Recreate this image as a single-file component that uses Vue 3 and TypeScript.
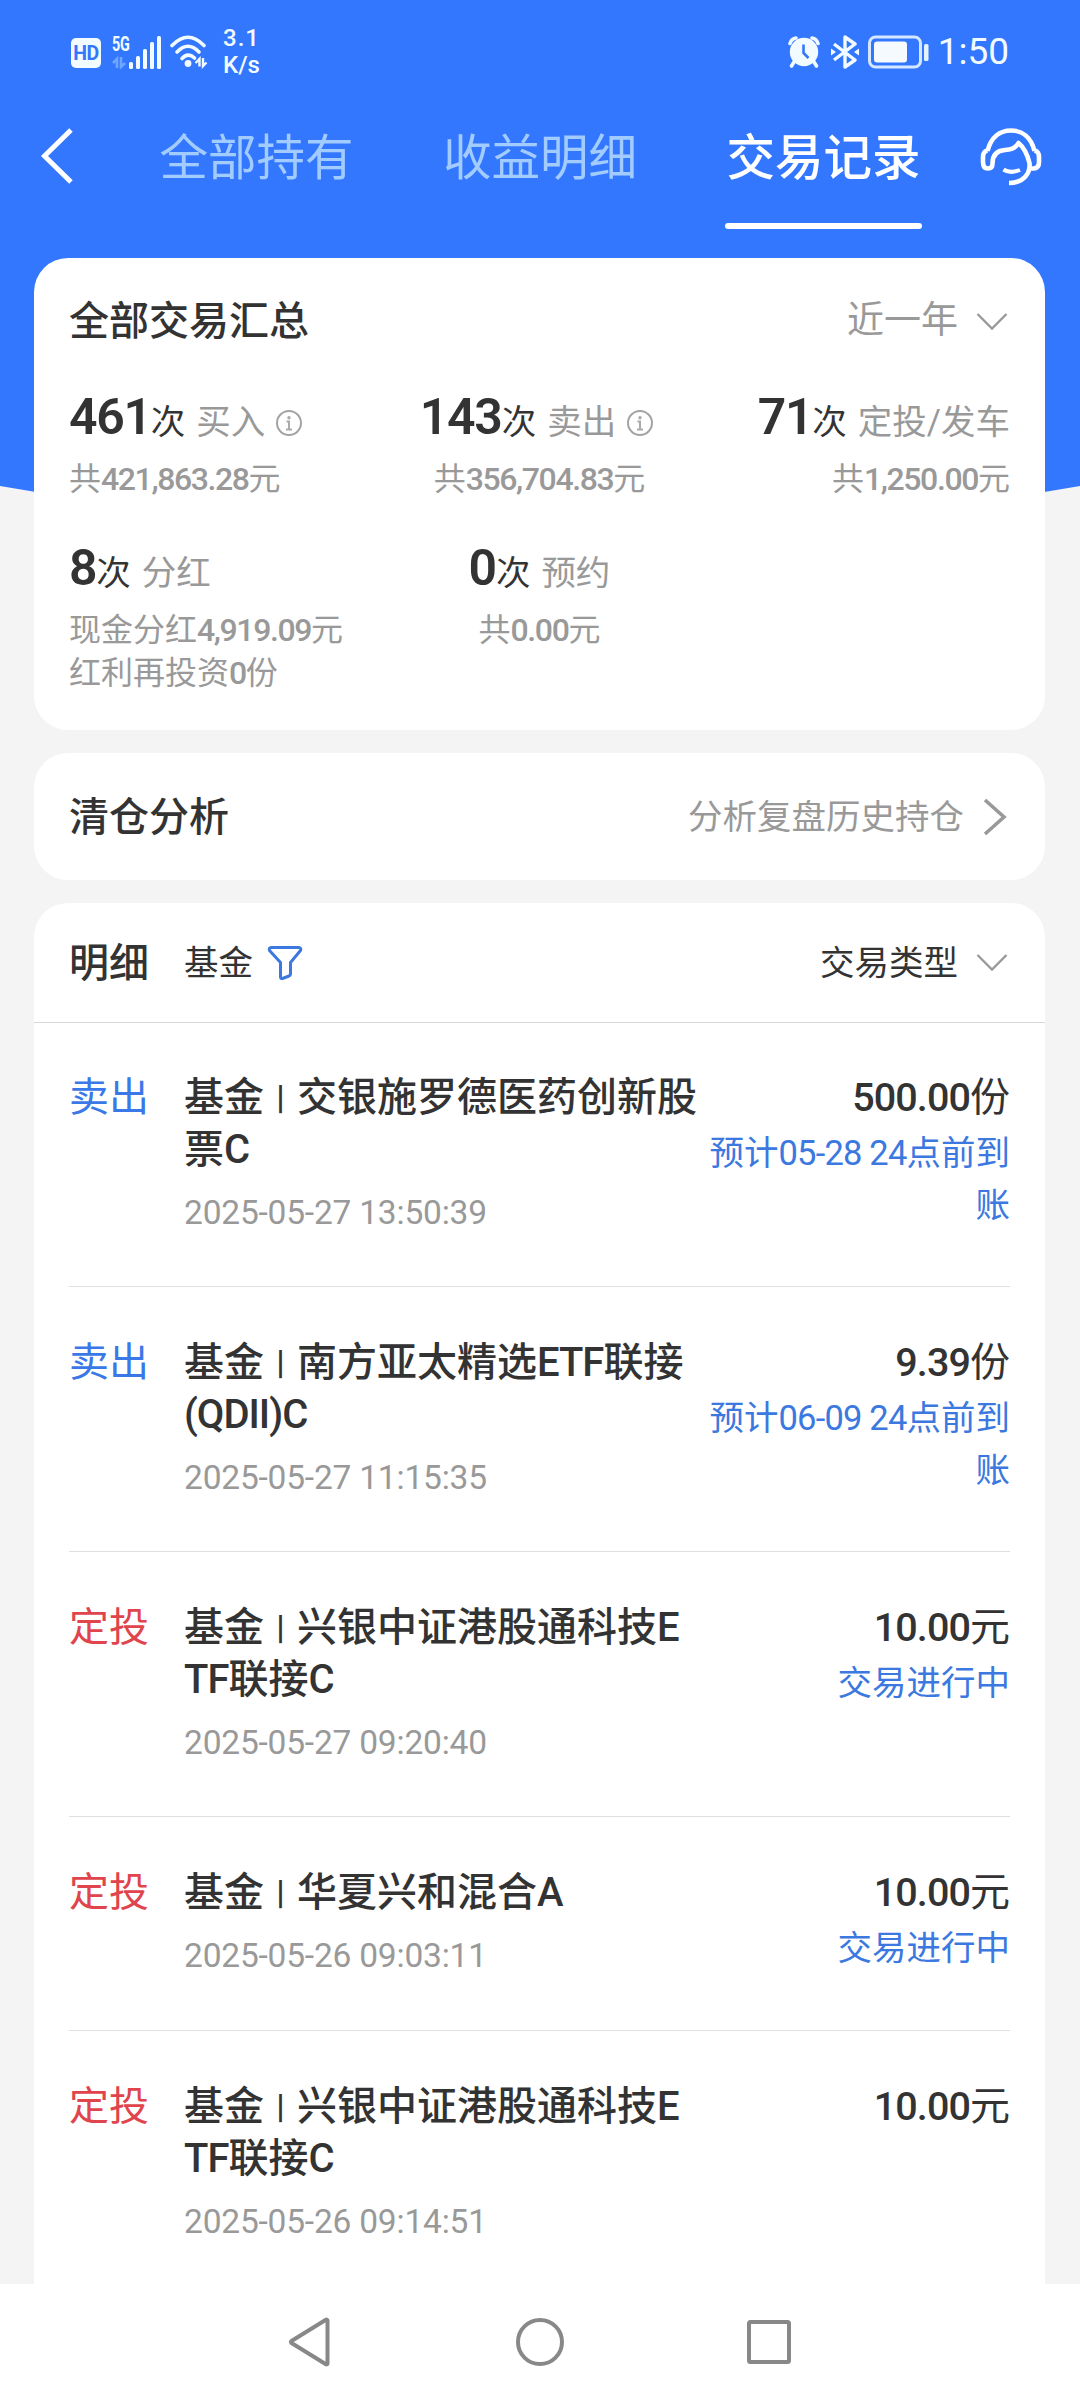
<script setup lang="ts">
interface Summary {
  count: string
  label: string
  info?: boolean
  lines: [string, string, string][]
}
interface Segment {
  text: string
  latin?: boolean
}
interface Trade {
  kind: 'sell' | 'plan'
  type: string
  lines: Segment[][]
  time: string
  amount: string
  unit: string
  notes: Segment[][]
}

const tabs = [
  { name: '全部持有', active: false },
  { name: '收益明细', active: false },
  { name: '交易记录', active: true },
]

const summaries: Summary[] = [
  { count: '461', label: '买入', info: true, lines: [['共', '421,863.28', '元']] },
  { count: '143', label: '卖出', info: true, lines: [['共', '356,704.83', '元']] },
  { count: '71', label: '定投/发车', lines: [['共', '1,250.00', '元']] },
  { count: '8', label: '分红', lines: [['现金分红', '4,919.09', '元'], ['红利再投资', '0', '份']] },
  { count: '0', label: '预约', lines: [['共', '0.00', '元']] },
]

const l = (text: string): Segment => ({ text, latin: true })
const c = (text: string): Segment => ({ text })

const trades: Trade[] = [
  {
    kind: 'sell', type: '卖出',
    lines: [[c('交银施罗德医药创新股')], [c('票'), l('C')]],
    time: '2025-05-27 13:50:39', amount: '500.00', unit: '份',
    notes: [[c('预计'), l('05-28 24'), c('点前到')], [c('账')]],
  },
  {
    kind: 'sell', type: '卖出',
    lines: [[c('南方亚太精选'), l('ETF'), c('联接')], [l('(QDII)C')]],
    time: '2025-05-27 11:15:35', amount: '9.39', unit: '份',
    notes: [[c('预计'), l('06-09 24'), c('点前到')], [c('账')]],
  },
  {
    kind: 'plan', type: '定投',
    lines: [[c('兴银中证港股通科技'), l('E')], [l('TF'), c('联接'), l('C')]],
    time: '2025-05-27 09:20:40', amount: '10.00', unit: '元',
    notes: [[c('交易进行中')]],
  },
  {
    kind: 'plan', type: '定投',
    lines: [[c('华夏兴和混合'), l('A')]],
    time: '2025-05-26 09:03:11', amount: '10.00', unit: '元',
    notes: [[c('交易进行中')]],
  },
  {
    kind: 'plan', type: '定投',
    lines: [[c('兴银中证港股通科技'), l('E')], [l('TF'), c('联接'), l('C')]],
    time: '2025-05-26 09:14:51', amount: '10.00', unit: '元',
    notes: [],
  },
]
</script>

<template>
  <div class="screen">
    <svg class="backdrop" width="1080" height="540" viewBox="0 0 1080 540">
      <path d="M0 0H1080V486Q540 580 0 486Z" fill="#3377ff" />
    </svg>

    <div class="status">
      <div class="status-left">
        <span class="hd">HD</span>
        <div class="network">
          <span class="gen">5G</span>
          <svg class="signal" width="50" height="33" viewBox="0 0 50 33">
            <g fill="#f2fbff">
              <rect x="17" y="26" width="4" height="7" rx="1.5" />
              <rect x="24" y="20" width="4" height="13" rx="1.5" />
              <rect x="31" y="13" width="4" height="20" rx="1.5" />
              <rect x="38" y="6" width="4" height="27" rx="1.5" />
              <rect x="45" y="0" width="4" height="33" rx="1.5" />
            </g>
            <path d="M1 27L5 23V32M9 21V31L13 27" stroke="#6fa6ff" stroke-width="2.6" fill="none" />
          </svg>
        </div>
        <svg class="wifi" width="38" height="34" viewBox="0 0 38 34">
          <g fill="none" stroke="#f2fbff" stroke-width="3.6" stroke-linecap="round">
            <path d="M2 10.5Q18 -6 34 10.5" />
            <path d="M7 17Q18 5.5 29 17" />
            <path d="M12 23.5Q18 17 24.5 23" />
          </g>
          <circle cx="18" cy="28.5" r="3.4" fill="#f2fbff" />
          <path d="M25.5 28L29.5 24V31.5M33 23V31L36.5 27.5" stroke="#f2fbff" stroke-width="2.4" fill="none" />
        </svg>
        <div class="speed"><span>3.1</span><span>K/s</span></div>
      </div>
      <div class="status-right">
        <svg width="34" height="34" viewBox="0 0 34 34">
          <g fill="none" stroke="#f2fbff" stroke-linecap="round">
            <path d="M3 8.5Q4.5 3.5 9 3M31 8.5Q29.5 3.5 25 3" stroke-width="3.6" />
            <path d="M7 27L4.5 31M27 27L29.5 31" stroke-width="3.6" />
          </g>
          <circle cx="17" cy="17" r="14.2" fill="#f2fbff" />
          <path d="M16.5 9.5V18L21.5 23" stroke="#3377ff" stroke-width="2.6" fill="none" />
        </svg>
        <svg class="bt" width="30" height="34" viewBox="0 0 30 34">
          <path d="M4 9L25 25L15 32V2L25 9L4 25" fill="none" stroke="#f2fbff" stroke-width="3.4" stroke-linejoin="round" />
          <path d="M1 13.5L6 17L1 20.5ZM29 13.5L24 17L29 20.5Z" fill="#f2fbff" />
        </svg>
        <svg class="battery" width="62" height="34" viewBox="0 0 62 34">
          <rect x="1.5" y="2" width="51" height="30" rx="6" fill="none" stroke="#d5e8ff" stroke-width="3" />
          <rect x="6" y="6.5" width="33" height="21" rx="3" fill="#f5faff" />
          <rect x="56" y="9" width="4.5" height="17" rx="1.5" fill="#e5f2ff" />
        </svg>
        <span class="clock">1:50</span>
      </div>
    </div>

    <div class="nav">
      <svg class="back" width="36" height="58" viewBox="0 0 36 58">
        <path d="M33 3L6.5 29L33 55" fill="none" stroke="#fff" stroke-width="5" />
      </svg>
      <div class="tabs">
        <div v-for="t in tabs" :key="t.name" class="tab" :class="{ active: t.active }">{{ t.name }}</div>
      </div>
      <svg class="service" width="62" height="60" viewBox="0 0 62 60">
        <g fill="none" stroke="#fff" stroke-width="4.6" stroke-linejoin="round">
          <path d="M7.5 24C11 10 20 3.5 31 3.5S51 10 54.500 24" />
          <path d="M7.5 23.5Q3 24.5 3 30V35Q3 41.5 8 41.5Q12.5 41.5 12.5 36.5C12.5 28 17 23.5 25 23Q35 22.5 38.5 16Q46 22 49.5 36C50.5 46 44 56 29 56" />
          <path d="M54.5 23.5Q59 24.5 59 30V35Q59 41 54 41.5H50" />
          <path d="M23.5 42.5Q30 47 40 43" stroke-width="4" />
        </g>
      </svg>
    </div>

    <div class="cards">
      <section class="card summary">
        <div class="card-head">
          <h2>全部交易汇总</h2>
          <span class="period">近一年</span>
          <svg class="down" width="32" height="20" viewBox="0 0 32 20">
            <path d="M1.5 2L16 16.5L30.5 2" fill="none" stroke="#999" stroke-width="2.3" />
          </svg>
        </div>
        <div class="grid">
          <div v-for="s in summaries" :key="s.label" class="cell">
            <div class="count">
              <b>{{ s.count }}</b><i>次</i><em>{{ s.label }}</em>
              <svg v-if="s.info" width="28" height="28" viewBox="0 0 28 28">
                <circle cx="14" cy="14" r="12" fill="none" stroke="#a3a3a3" stroke-width="2" />
                <circle cx="14" cy="8.8" r="1.7" fill="#aaa" />
                <path d="M11.5 12.5H14V20.5M11 20.5H17" fill="none" stroke="#aaa" stroke-width="2" />
              </svg>
            </div>
            <div v-for="(line, i) in s.lines" :key="i" class="sub">{{ line[0] }}<span>{{ line[1] }}</span>{{ line[2] }}</div>
          </div>
        </div>
      </section>

      <section class="card analysis">
        <h2>清仓分析</h2>
        <span class="hint">分析复盘历史持仓</span>
        <svg width="26" height="38" viewBox="0 0 26 38">
          <path d="M3 2L22 19L3 36" fill="none" stroke="#999" stroke-width="3.6" />
        </svg>
      </section>

      <section class="card list">
        <div class="list-head">
          <h2>明细</h2>
          <span class="scope">基金</span>
          <svg class="funnel" width="36" height="36" viewBox="0 0 36 36">
            <path d="M4 2.5H32Q34.5 3 33.5 5.5L23.5 17.5V29Q23.5 30.5 22 31L15.5 33.5Q13.5 34 13.5 32V17.5L2.5 5.5Q1.5 3 4 2.5Z" fill="none" stroke="#3b78e0" stroke-width="3" stroke-linejoin="round" />
          </svg>
          <span class="filter">交易类型</span>
          <svg class="down" width="32" height="20" viewBox="0 0 32 20">
            <path d="M1.5 2L16 16.5L30.5 2" fill="none" stroke="#999" stroke-width="2.3" />
          </svg>
        </div>
        <div v-for="(t, n) in trades" :key="n" class="trade" :class="t.kind">
          <span class="type">{{ t.type }}</span>
          <div class="body">
            <div v-for="(line, i) in t.lines" :key="i" class="name">
              <template v-if="i === 0">基金<span class="bar">|</span></template><span v-for="(seg, k) in line" :key="k" :class="{ latin: seg.latin }">{{ seg.text }}</span>
            </div>
            <div class="time">{{ t.time }}</div>
          </div>
          <div class="result">
            <div class="amount"><b>{{ t.amount }}</b>{{ t.unit }}</div>
            <div v-for="(line, i) in t.notes" :key="i" class="note"><span v-for="(seg, k) in line" :key="k" :class="{ num: seg.latin }">{{ seg.text }}</span></div>
          </div>
        </div>
      </section>
    </div>

    <div class="system">
      <svg width="52" height="52" viewBox="0 0 52 52"><path d="M42.5 4.5V47.5Q42 49 40.5 48L6.5 27Q5.5 26 6.5 25L40.5 4Q42 3 42.5 4.5Z" fill="none" stroke="#888" stroke-width="4" stroke-linejoin="round" /></svg>
      <svg width="52" height="52" viewBox="0 0 52 52"><circle cx="26" cy="26" r="22" fill="none" stroke="#888" stroke-width="4" /></svg>
      <svg width="52" height="52" viewBox="0 0 52 52"><rect x="6" y="6" width="40" height="40" rx="1.5" fill="none" stroke="#888" stroke-width="4" /></svg>
    </div>
  </div>
</template>

<style>
body {
  margin: 0;
  background: #f4f4f4;
}
</style>

<style scoped>
.screen {
  position: relative;
  width: 1080px;
  height: 2400px;
  overflow: hidden;
  display: flex;
  flex-direction: column;
  background: #f4f4f4;
  color: #333;
  font-family: Roboto, "Noto Sans CJK SC", sans-serif;
  white-space: nowrap;
}
.backdrop {
  position: absolute;
  left: 0;
  top: 0;
}
svg {
  display: block;
  flex: none;
}
h2 {
  margin: 0;
  height: 52px;
  font-size: 40px;
  font-weight: 500;
  line-height: 54px;
}

.status {
  position: relative;
  height: 104px;
  box-sizing: border-box;
  padding: 0 71px;
  display: flex;
  justify-content: space-between;
  color: #f2fbff;
}
.status-left,
.status-right {
  display: flex;
  align-items: center;
}
.hd {
  width: 30px;
  height: 30px;
  margin-top: 2px;
  border-radius: 5px;
  background: #f2fbff;
  color: #3377ff;
  font-size: 19.5px;
  font-weight: 700;
  line-height: 31px;
  letter-spacing: -.5px;
  text-align: center;
}
.network {
  position: relative;
  margin-left: 11px;
}
.gen {
  position: absolute;
  left: 0;
  top: 0;
  font-size: 20px;
  font-weight: 700;
  line-height: 16px;
  letter-spacing: -.5px;
  transform: scaleX(.72);
  transform-origin: left;
}
.wifi {
  margin-left: 8px;
}
.speed {
  display: flex;
  flex-direction: column;
  margin-left: 15px;
  font-size: 24px;
  font-weight: 500;
  line-height: 27.5px;
}
.speed span:first-child {
  letter-spacing: 1px;
}
.bt {
  margin-left: 9px;
}
.battery {
  margin-left: 8px;
}
.clock {
  margin-left: 8px;
  font-size: 37px;
  line-height: 42px;
}

.nav {
  position: relative;
  height: 154px;
  display: flex;
  align-items: flex-start;
}
.back {
  margin: 23px 0 0 38px;
}
.tabs {
  flex: 1;
  display: flex;
  justify-content: space-between;
  margin: 0 58px 0 84px;
}
.tab {
  width: 197px;
  height: 125px;
  display: flex;
  flex-direction: column;
  align-items: center;
  justify-content: space-between;
  font-size: 48.5px;
  line-height: 110px;
  color: #a2ccff;
}
.active {
  color: #fff;
  font-weight: 500;
}
.active::after {
  content: "";
  width: 197px;
  height: 6px;
  border-radius: 3px;
  background: #fff;
}
.service {
  margin: 23px 38px 0 0;
}

.cards {
  position: relative;
  flex: 1;
  min-height: 0;
  display: flex;
  flex-direction: column;
  gap: 23px;
  padding: 0 35px 0 34px;
}
.card {
  box-sizing: border-box;
  background: #fff;
  border-radius: 34px;
  padding: 0 35px;
}
.summary {
  height: 472px;
  padding-top: 37px;
}
.card-head {
  display: flex;
  align-items: center;
  height: 52px;
}
.period {
  margin-left: auto;
  font-size: 37px;
  line-height: 54px;
  color: #999;
}
.down {
  margin: 1px 2px 0 18px;
}
.grid {
  display: grid;
  grid-template-columns: 1fr 1fr 1fr;
  row-gap: 34px;
  margin-top: 37px;
}
.cell:nth-child(3n + 2) {
  justify-self: center;
  text-align: center;
}
.cell:nth-child(3n) {
  justify-self: end;
  text-align: right;
}
.count {
  display: flex;
  align-items: baseline;
  height: 74px;
  line-height: 66px;
}
.cell:nth-child(3n + 2) .count {
  justify-content: center;
}
.count b {
  font-size: 50px;
  font-weight: 600;
  letter-spacing: -1.3px;
}
.count i,
.count em {
  font-style: normal;
  font-size: 34.5px;
}
.count em {
  margin-left: 11px;
  color: #999;
}
.count svg {
  margin: 0 5px 0 10px;
  transform: translateY(3px);
}
.sub {
  height: 43px;
  line-height: 43px;
  font-size: 32px;
  color: #999;
}
.sub span {
  font-weight: 500;
  letter-spacing: -1.4px;
}

.analysis {
  height: 127px;
  display: flex;
  align-items: center;
}
.hint {
  margin-left: auto;
  font-size: 34.5px;
  line-height: 52px;
  color: #999;
}
.analysis svg {
  margin: 0 2px 0 18px;
}

.list {
  flex: 1;
  min-height: 0;
  overflow: hidden;
  border-radius: 34px 34px 0 0;
}
.list-head {
  display: flex;
  align-items: center;
  height: 119px;
  margin: 0 -35px;
  padding: 0 35px;
  border-bottom: 1px solid #d8d8d8;
}
.scope {
  margin-left: 35px;
  font-size: 34.5px;
  line-height: 52px;
}
.funnel {
  margin-left: 14px;
}
.filter {
  margin-left: auto;
  font-size: 34.5px;
  line-height: 52px;
}
.trade {
  display: flex;
  align-items: flex-start;
  box-sizing: border-box;
  min-height: 214px;
  padding: 49px 0 43px;
  border-bottom: 1px solid #e0e0e0;
}
.list-head + .trade {
  padding-top: 48px;
}
.trade:last-child {
  border-bottom: 0;
}
.type {
  width: 115px;
  font-size: 40px;
  line-height: 53px;
}
.sell .type {
  color: #3b78e7;
}
.plan .type {
  color: #e0444c;
}
.name {
  height: 52px;
  line-height: 53px;
  font-size: 40px;
  font-weight: 500;
}
.bar {
  display: inline-block;
  width: 33px;
  text-align: center;
  font-size: 34px;
  line-height: 30px;
  transform: translateY(-2px);
}
.latin {
  letter-spacing: -1px;
}
.time {
  margin-top: 16px;
  height: 52px;
  line-height: 44px;
  font-size: 33.5px;
  letter-spacing: -.2px;
  color: #999;
}
.result {
  margin-left: auto;
  height: 156px;
  margin-bottom: -60px;
  text-align: right;
}
.amount {
  height: 52px;
  line-height: 54px;
  font-size: 40px;
}
.amount b {
  font-size: 39.5px;
  font-weight: 500;
  letter-spacing: -.9px;
}
.note {
  height: 52px;
  line-height: 61px;
  font-size: 34.5px;
  color: #3b78e0;
}
.num {
  letter-spacing: -.8px;
}

.system {
  position: relative;
  height: 116px;
  flex: none;
  display: flex;
  justify-content: space-between;
  align-items: center;
  box-sizing: border-box;
  padding: 0 285px;
  background: #fff;
}
</style>
